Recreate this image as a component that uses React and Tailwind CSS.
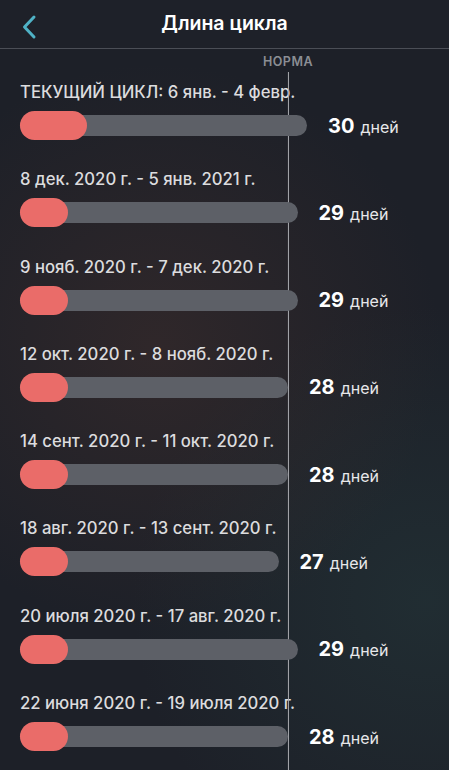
import React from "react";

const cycles = [
  { label: "ТЕКУЩИЙ ЦИКЛ: 6 янв. - 4 февр.", days: 30, current: true },
  { label: "8 дек. 2020 г. - 5 янв. 2021 г.", days: 29 },
  { label: "9 нояб. 2020 г. - 7 дек. 2020 г.", days: 29 },
  { label: "12 окт. 2020 г. - 8 нояб. 2020 г.", days: 28 },
  { label: "14 сент. 2020 г. - 11 окт. 2020 г.", days: 28 },
  { label: "18 авг. 2020 г. - 13 сент. 2020 г.", days: 27 },
  { label: "20 июля 2020 г. - 17 авг. 2020 г.", days: 29 },
  { label: "22 июня 2020 г. - 19 июля 2020 г.", days: 28 },
];

const CycleRow = ({ cycle }) => {
  // track length grows ~9.5px per day
  const trackWidth = 287 + (cycle.days - 30) * 9.5;

  return (
    <div className="pb-[29.3px]">
      <p className="text-[16.7px] leading-[20px] font-medium text-[#dcdcde] whitespace-nowrap">
        {cycle.label}
      </p>
      <div className="flex items-center h-[29px] mt-[9px]">
        <div
          className="relative h-[21px] rounded-full bg-[#5d6067]"
          style={{ width: trackWidth }}
        >
          <div
            className={
              "absolute left-0 top-[-4px] h-[29px] rounded-full bg-[#ea6c69] " +
              (cycle.current ? "w-[67px]" : "w-[48px]")
            }
          />
        </div>
        <div className="ml-[21px] flex items-baseline text-white">
          <span className="text-[20px] font-bold">{cycle.days}</span>
          <span className="ml-[6px] text-[16px] text-[#e8e8ea]">дней</span>
        </div>
      </div>
    </div>
  );
};

const App = () => {
  return (
    <div
      className="w-[449px] h-[770px] overflow-hidden bg-[#1d2028] bg-[radial-gradient(circle_at_35%_45%,rgba(70,48,44,0.45),transparent_55%),radial-gradient(circle_at_95%_78%,rgba(40,70,70,0.35),transparent_40%)]"
      style={{ fontFamily: "Inter, 'Noto Sans', sans-serif" }}
    >
      {/* Header */}
      <div className="relative h-[49px] flex items-center justify-center border-b border-[#4b4e56] bg-[#1e2129]">
        <button className="absolute left-[17px] top-[10px] p-1">
          <svg width="16" height="26" viewBox="0 0 16 26" fill="none">
            <path
              d="M13 3 L3.5 13 L13 23"
              stroke="#4fb2c6"
              strokeWidth="3"
              strokeLinecap="round"
              strokeLinejoin="round"
            />
          </svg>
        </button>
        <h1 className="text-[19.5px] font-semibold text-white">Длина цикла</h1>
      </div>

      {/* List */}
      <div className="relative px-[20px] pt-[33px]">
        <div className="absolute left-[288px] top-[6px] bottom-0 flex flex-col items-center -translate-x-1/2">
          <span className="text-[12.5px] leading-[14px] font-semibold tracking-[0.5px] text-[#8b8e94]">
            НОРМА
          </span>
          <div className="mt-[3px] w-px flex-1 bg-[#a9abb0] min-h-[800px]" />
        </div>
        {cycles.map((cycle) => (
          <CycleRow key={cycle.label} cycle={cycle} />
        ))}
      </div>
    </div>
  );
};

export default App;
